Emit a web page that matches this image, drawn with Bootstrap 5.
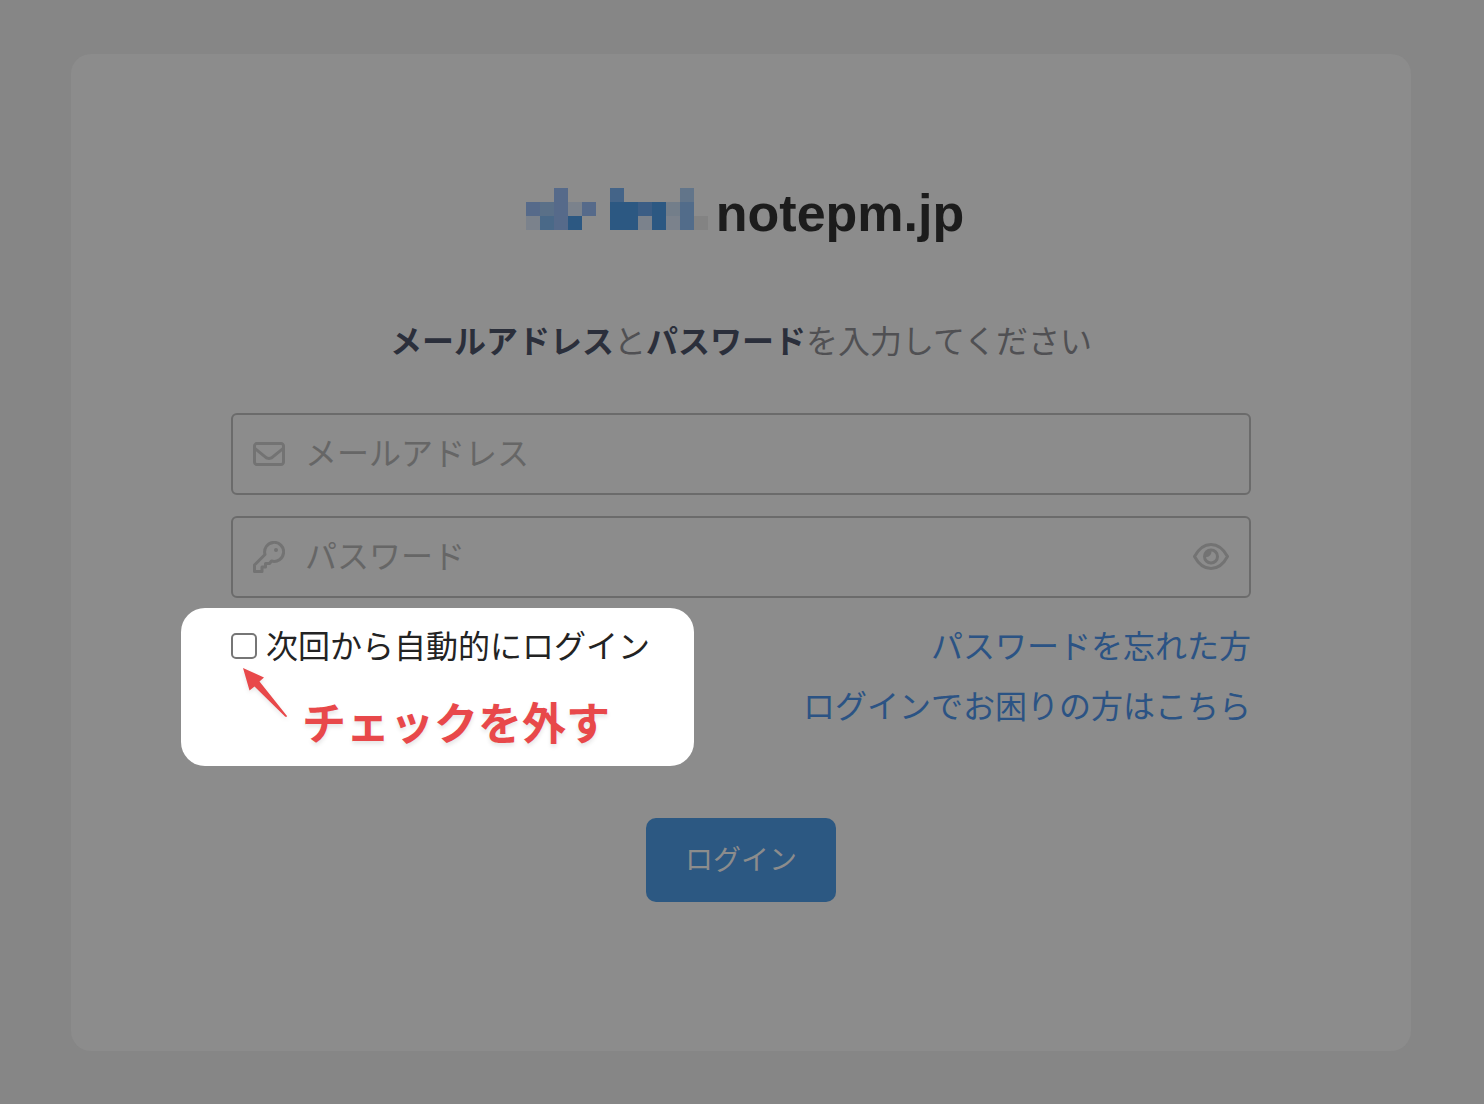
<!DOCTYPE html>
<html lang="ja">
<head>
<meta charset="utf-8">
<meta name="viewport" content="width=device-width, initial-scale=1">
<title>ログイン - notepm.jp</title>
<link href="https://cdn.jsdelivr.net/npm/bootstrap@5.3.0/dist/css/bootstrap.min.css" rel="stylesheet">
<style>
  body {
    background: #868686;
    color: #232323;
    font-family: "Liberation Sans", "Noto Sans CJK JP", sans-serif;
    font-size: 32px;
    line-height: 60px;
    min-height: 100vh;
    padding: 54px 73px 52px 71px;
  }
  .jp { font-family: "Noto Sans CJK JP", sans-serif; }
  .login-panel { background: #8c8c8c; border-radius: 20px; padding: 127px 160px 149px; }
  .site-title { font-size: 52px; line-height: 64px; color: #1c1c1c; margin-bottom: 64px; }
  .intro { color: #505053; margin-bottom: 44px; }
  .intro strong { color: #2b2f3b; }
  .field-box { border: 2px solid #6b6b6b; border-radius: 6px; padding: 0 20px; color: #737373; height: 82px; }
  .field-box input { color: #444; font-size: 32px; line-height: 48px; padding: 12px 20px 18px; }
  .field-box input::placeholder { color: #666; opacity: 1; }
  .fields { gap: 21px; margin-bottom: 10px; }
  .spotlight { background: #fff; border-radius: 24px; margin-left: -50px; padding: 6px 48px 2px 50px; width: 513px; }
  .spotlight label { margin-left: 9px; padding-bottom: 4px; }
  .spotlight .form-check-input { width: 26px; height: 26px; border: 2px solid #767676; border-radius: 5px; }
  .callout-text { font-size: 44px; line-height: 86px; color: #e8484a; padding-left: 71px; text-shadow: 0 3px 4px rgba(0,0,0,.1); }
  .callout-arrow { left: 59px; top: 58px; filter: drop-shadow(0 2px 2px rgba(0,0,0,.1)); }
  .help-links { padding-top: 6px; }
  .help-links a { color: #2b5384; }
  .btn-login { background: #2c5882; color: #8c8c8c; font-size: 28px; line-height: 40px; border: 0; border-radius: 10px; padding: 20px 39px 24px; margin-top: 52px; }
  .btn-login:hover { background: #254b70; color: #8c8c8c; }
</style>
</head>
<body>
<main class="login-panel">
  <h1 class="site-title fw-bold d-flex justify-content-center align-items-center">
    <svg class="ms-2 mb-2" width="182" height="42" viewBox="0 0 13 3" shape-rendering="crispEdges" aria-hidden="true">
      <path fill="#566a8a" d="M2 0h1v3H2zM0 1h1v1H0zM4 1h1v1H4z"/>
      <path fill="#2c5882" d="M6 1h2v2H6zM9 1h1v2H9zM3 2h1v1H3z"/>
      <path fill="#7b828c" d="M3 1h1v1H3zM0 2h1v1H0zM8 2h1v1H8zM10 2h1v1h-1z"/>
      <path fill="#446488" d="M6 0h1v1H6z"/>
      <path fill="#62758a" d="M11 0h1v1h-1z"/>
      <path fill="#5a7088" d="M1 1h1v1H1z"/>
      <path fill="#3b5d85" d="M8 1h1v1H8z"/>
      <path fill="#737e8a" d="M10 1h1v1h-1z"/>
      <path fill="#526c8a" d="M11 1h1v2h-1z"/>
      <path fill="#4a6988" d="M1 2h1v1H1z"/>
      <path fill="#838383" d="M12 2h1v1h-1z"/>
    </svg>
    <span class="ms-1 ps-1">notepm.jp</span>
  </h1>
  <p class="intro jp text-center"><strong>メールアドレス</strong>と<strong>パスワード</strong>を入力してください</p>
  <form>
    <div class="fields d-flex flex-column">
      <div class="field-box d-flex align-items-center">
        <svg class="flex-shrink-0" width="32" height="32" viewBox="0 0 512 512" fill="currentColor" aria-hidden="true"><path d="M64 112c-8.800 0-16 7.200-16 16v22L220 292c21 17 50 17 71 0L464 150v-22c0-8.800-7.200-16-16-16H64zM48 212v172c0 8.800 7.200 16 16 16h384c8.800 0 16-7.200 16-16V212L322 329c-38 31-94 31-132 0L48 212zM0 128c0-35 29-64 64-64h384c35 0 64 29 64 64v256c0 35-29 64-64 64H64c-35 0-64-29-64-64V128z"/></svg>
        <input class="form-control jp bg-transparent border-0 shadow-none" type="email" placeholder="メールアドレス" aria-label="メールアドレス">
      </div>
      <div class="field-box d-flex align-items-center">
        <svg class="flex-shrink-0" width="32" height="32" viewBox="0 0 32 32" fill="none" stroke="currentColor" stroke-width="3" stroke-linejoin="round" aria-hidden="true"><path d="M12 13.500A9.500 9.500 0 1 1 18.500 20L16.500 22.500H12.500V26H9V30.500H1.500V24Z"/><circle cx="23" cy="9" r="2" fill="currentColor" stroke="none"/></svg>
        <input class="form-control jp bg-transparent border-0 shadow-none" type="password" placeholder="パスワード" aria-label="パスワード">
        <button class="btn p-0 border-0 d-flex flex-shrink-0" type="button" aria-label="パスワードを表示">
          <svg width="36" height="32" viewBox="0 0 36 32" fill="none" stroke="#737373" stroke-width="3" stroke-linejoin="round" aria-hidden="true"><path d="M1.500 15.500C5 9 10.500 3.500 18 3.500S31 9 34.500 15.500C31 22 25.500 27.500 18 27.500S5 22 1.500 15.500Z"/><circle cx="18" cy="15.500" r="6.500"/><path fill="#737373" stroke="none" d="M18 9a5 5 0 0 1-6.500 6.500A6.500 6.500 0 0 1 18 9Z"/></svg>
        </button>
      </div>
    </div>
    <div class="d-flex justify-content-between align-items-start">
      <div class="spotlight position-relative">
        <div class="d-flex align-items-center">
          <input class="form-check-input m-0 flex-shrink-0" type="checkbox" id="remember">
          <label class="jp text-nowrap" for="remember">次回から自動的にログイン</label>
        </div>
        <svg class="callout-arrow position-absolute" width="52" height="54" viewBox="0 0 52 54" aria-hidden="true"><path fill="#e8484a" d="M3 2 24 11.500 19.500 15.500 47 50Q46.500 51.500 45 50.500L14.500 20.500 9.500 24.500Z"/></svg>
        <div class="callout-text jp fw-bold text-nowrap">チェックを外す</div>
      </div>
      <div class="help-links jp d-flex flex-column align-items-end">
        <a class="text-decoration-none" href="#">パスワードを忘れた方</a>
        <a class="text-decoration-none" href="#">ログインでお困りの方はこちら</a>
      </div>
    </div>
    <div class="text-center d-flex justify-content-center">
      <button class="btn btn-login jp" type="submit">ログイン</button>
    </div>
  </form>
</main>
<script src="https://cdn.jsdelivr.net/npm/bootstrap@5.3.0/dist/js/bootstrap.bundle.min.js"></script>
</body>
</html>
